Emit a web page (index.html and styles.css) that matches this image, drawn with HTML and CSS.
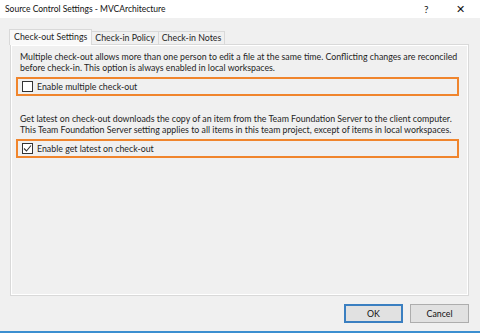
FILE: index.html
```html
<!DOCTYPE html>
<html>
<head>
    <title>Source Control Settings - MVCArchitecture</title>
    <link rel="stylesheet" href="styles.css">
</head>
<body>
    <div class="window">
        <div class="titlebar">
            <span class="title">Source Control Settings - MVCArchitecture</span>
            <span class="help">?</span>
            <span class="close">&#x2715;</span>
        </div>

        <div class="tabs">
            <div class="tab active">Check-out Settings</div>
            <div class="tab">Check-in Policy</div>
            <div class="tab">Check-in Notes</div>
        </div>

        <div class="panel">
            <p class="desc">Multiple check-out allows more than one person to edit a file at the same time. Conflicting changes are reconciled before check-in. This option is always enabled in local workspaces.</p>
            <label class="option">
                <span class="box"></span>
                Enable multiple check-out
            </label>

            <p class="desc">Get latest on check-out downloads the copy of an item from the Team Foundation Server to the client computer. This Team Foundation Server setting applies to all items in this team project, except of items in local workspaces.</p>
            <label class="option">
                <span class="box checked">
                    <svg width="9" height="9" viewBox="0 0 9 9"><path d="M1 4.5 L3.5 7 L8 1.5" fill="none" stroke="#333" stroke-width="1.1"/></svg>
                </span>
                Enable get latest on check-out
            </label>
        </div>

        <div class="footer">
            <button class="btn default">OK</button>
            <button class="btn">Cancel</button>
        </div>
    </div>
</body>
</html>
```

FILE: styles.css
```css
body {
    margin: 0;
    background-color: #f0f0f0;
    font-family: Lato, 'Open Sans', Arial, sans-serif;
    font-size: 8.8px;
    color: #1e1e1e;
}
.window {
    height: 331px;
    border-bottom: 2px solid #3c8fd0;
    display: flex;
    flex-direction: column;
}
.titlebar {
    height: 18px;
    background: white;
    display: flex;
    align-items: center;
    padding-left: 5px;
    font-size: 8.5px;
    color: #111;
}
.title { flex: 1; }
.help { width: 12px; margin-right: 20px; font-size: 10px; }
.close { width: 12px; margin-right: 12px; font-size: 11px; }
.tabs {
    display: flex;
    align-items: flex-end;
    margin-top: 11px;
    padding-left: 9px;
    height: 15px;
}
.tab {
    height: 12px;
    line-height: 12px;
    padding: 0 3px;
    border: 1px solid #d9d9d9;
    border-bottom: none;
    background: #f0f0f0;
    margin-left: -1px;
}
.tab.active {
    height: 15px;
    line-height: 14px;
    background: #f9f9f9;
    margin-left: 0;
    position: relative;
    z-index: 1;
    margin-bottom: -1px;
    padding: 0 4px;
}
.panel {
    margin: 0 11px 0 10px;
    height: 243px;
    border: 1px solid #d9d9d9;
    box-shadow: inset 1px 1px 0 #fff, inset -1px -1px 0 #fff;
    padding: 7px 5px 0 9px;
}
.desc {
    margin: 0;
    line-height: 10.5px;
}
.option {
    display: flex;
    align-items: center;
    gap: 4px;
    height: 15px;
    margin: 4px 4px 18px -4px;
    padding-left: 4px;
    border: 2px solid #f0852d;
}
.box {
    width: 9px;
    height: 9px;
    border: 1px solid #333;
    background: white;
    display: flex;
    align-items: center;
    justify-content: center;
}
.footer {
    display: flex;
    justify-content: flex-end;
    gap: 7px;
    padding: 8px 11px 0 0;
}
.btn {
    width: 59px;
    height: 19px;
    background: #e1e1e1;
    border: 1px solid #adadad;
    font-family: inherit;
    font-size: 8.8px;
    color: #111;
    padding: 0;
}
.btn.default {
    border: 2px solid #3a7fc1;
}
```
